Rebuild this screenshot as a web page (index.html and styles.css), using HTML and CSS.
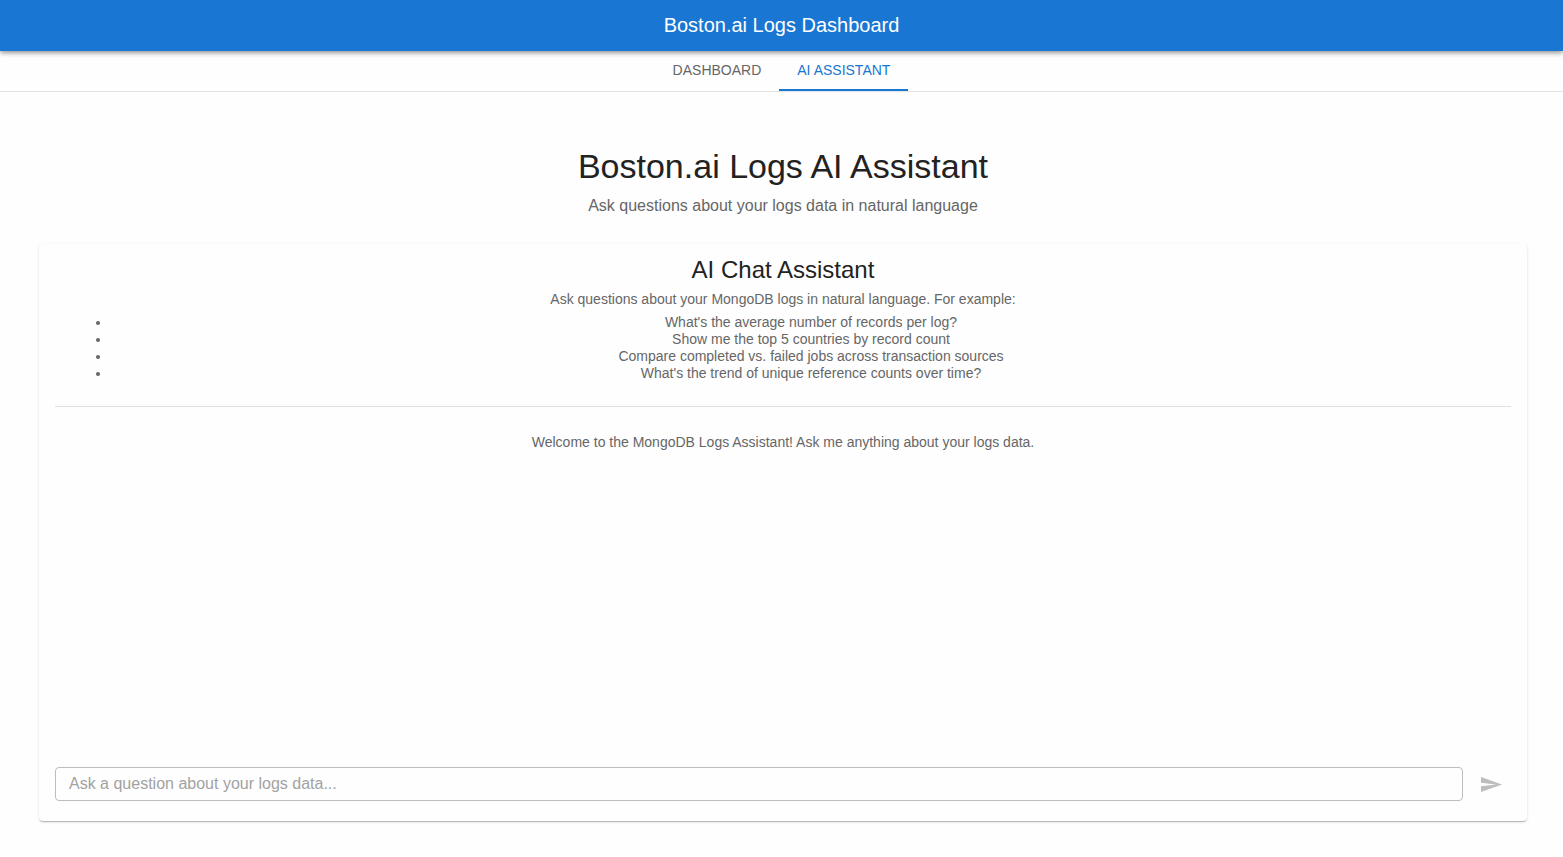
FILE: index.html
```html
<!DOCTYPE html>
<html lang="en">
<head>
<meta charset="utf-8">
<meta name="viewport" content="width=device-width, initial-scale=1">
<title>Boston.ai Logs Dashboard</title>
<link rel="stylesheet" href="styles.css">
</head>
<body>
<header class="app-bar"><div class="app-title">Boston.ai Logs Dashboard</div></header>
<nav class="tabs" role="tablist" aria-label="Sections">
  <button class="tab" type="button" role="tab" aria-selected="false">DASHBOARD</button>
  <button class="tab tab-active" type="button" role="tab" aria-selected="true">AI ASSISTANT</button>
</nav>
<main class="page">
  <h1 class="page-title">Boston.ai Logs AI Assistant</h1>
  <p class="page-subtitle">Ask questions about your logs data in natural language</p>
  <section class="card">
    <h2 class="card-title">AI Chat Assistant</h2>
    <p class="card-text">Ask questions about your MongoDB logs in natural language. For example:</p>
    <ul class="examples">
      <li>What's the average number of records per log?</li>
      <li>Show me the top 5 countries by record count</li>
      <li>Compare completed vs. failed jobs across transaction sources</li>
      <li>What's the trend of unique reference counts over time?</li>
    </ul>
    <hr class="divider">
    <div class="messages">
      <p class="card-text">Welcome to the MongoDB Logs Assistant! Ask me anything about your logs data.</p>
    </div>
    <form class="composer">
      <input class="question" type="text" aria-label="Question" placeholder="Ask a question about your logs data...">
      <button class="send" type="submit" aria-label="Send" disabled>
        <svg class="send-icon" viewBox="2 3 21 18" preserveAspectRatio="none" aria-hidden="true"><path d="M2.01 21 23 12 2.01 3 2 10l15 2-15 2z"/></svg>
      </button>
    </form>
  </section>
</main>
</body>
</html>
```
FILE: styles.css
```css
* {
  box-sizing: border-box;
}

body {
  margin: 0;
  min-height: 100vh;
  display: flex;
  flex-direction: column;
  background: #fefefe;
  color: #222;
  font-family: "Liberation Sans", Arial, sans-serif;
  text-align: center;
}

h1, h2, p, ul {
  margin: 0;
  font-weight: 400;
}

.app-bar {
  position: relative;
  padding: 12px 24px 13px;
  background: #1976d2;
  color: #fff;
  box-shadow: 0 2px 4px -1px rgba(0, 0, 0, .25), 0 3px 4px rgba(0, 0, 0, .14), 0 1px 8px rgba(0, 0, 0, .12);
}

.app-title {
  font-size: 20px;
  line-height: 26px;
}

.tabs {
  display: flex;
  justify-content: center;
  border-bottom: 1px solid #e4e4e4;
}

.tab {
  padding: 8px 18px;
  border: 0;
  border-bottom: 2px solid transparent;
  background: none;
  color: #666;
  font-family: inherit;
  font-size: 14px;
  line-height: 22px;
}

.tab-active {
  border-bottom-color: #1976d2;
  color: #1976d2;
}

.page {
  flex: 1;
  display: flex;
  flex-direction: column;
  padding: 54px 36px 36px 39px;
}

.page-title {
  font-size: 34px;
  line-height: 40px;
}

.page-subtitle {
  margin: 10px 0 28px;
  color: #666;
  font-size: 16px;
  line-height: 20px;
}

.card {
  flex: 1;
  display: flex;
  flex-direction: column;
  padding: 12px 16px 20px;
  border-radius: 4px;
  background: #fefefe;
  box-shadow: 0 2px 1px -1px rgba(0, 0, 0, .16), 0 1px 1px rgba(0, 0, 0, .08), 0 1px 3px rgba(0, 0, 0, .12);
}

.card-title {
  margin-bottom: 6px;
  font-size: 24px;
  line-height: 28px;
}

.card-text {
  color: #666;
  font-size: 14px;
  line-height: 18px;
}

.examples {
  margin: 6px 0 24px;
  padding-left: 56px;
  color: #666;
  font-size: 14px;
  line-height: 17px;
}

.divider {
  width: 100%;
  margin: 0;
  border: 0;
  border-top: 1px solid #e0e0e0;
}

.messages {
  flex: 1;
  padding: 26px 16px;
}

.composer {
  display: flex;
  align-items: center;
  gap: 8px;
}

.question {
  flex: 1;
  min-width: 0;
  padding: 6px 13px;
  border: 1px solid #bdbdbd;
  border-radius: 4px;
  background: transparent;
  color: #222;
  font-family: inherit;
  font-size: 16px;
  line-height: 20px;
}

.question::placeholder {
  color: #a2a2a2;
  opacity: 1;
}

.send {
  display: flex;
  padding: 8px 9px 8px 10px;
  border: 0;
  background: none;
  color: #bdbdbd;
}

.send-icon {
  width: 21px;
  height: 15px;
  fill: currentColor;
}
```
